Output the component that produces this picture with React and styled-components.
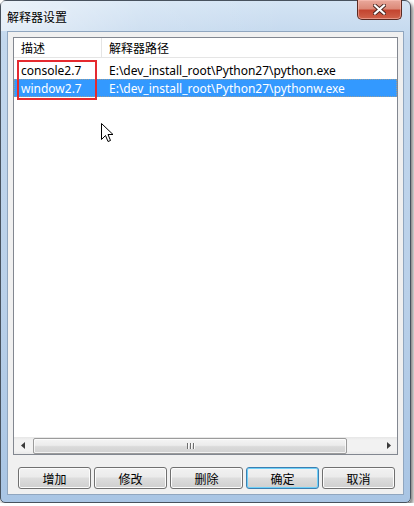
import React from 'react';
import styled, { createGlobalStyle, css } from 'styled-components';

const GlobalStyle = createGlobalStyle`
    html, body {
        margin: 0;
        padding: 0;
        background: #ffffff;
    }
    body {
        font-family: "Noto Sans", "Noto Sans CJK SC", sans-serif;
        font-size: 12px;
        color: #000;
    }
`;

const uiFont = `"Noto Sans", "Noto Sans CJK SC", sans-serif`;
const cjkFont = `"Noto Sans CJK SC", sans-serif`;

const Window = styled.div`
    box-sizing: border-box;
    width: 411px;
    height: 503px;
    display: flex;
    flex-direction: column;
    border: 1px solid #48525e;
    border-radius: 6px 6px 5px 5px;
    background: linear-gradient(to bottom, #d4e4f4 0%, #c2d7ed 8%, #b9d0e9 60%, #a9c5e4 100%);
    box-shadow: 2px 3px 4px rgba(0, 0, 0, 0.55);
`;

const TitleBar = styled.div`
    height: 30px;
    display: flex;
    align-items: flex-start;
    justify-content: space-between;
    padding-left: 6px;
    background: linear-gradient(100deg, rgba(255,255,255,0.55) 0%, rgba(255,255,255,0.15) 35%, rgba(255,255,255,0) 70%);
`;

const Title = styled.span`
    font-family: ${cjkFont};
    font-size: 12px;
    line-height: 14px;
    margin-top: 9px;
    color: #000;
    text-shadow: 0 0 6px rgba(255,255,255,0.9);
`;

const CloseButton = styled.div`
    box-sizing: border-box;
    width: 45px;
    height: 20px;
    margin-right: 8px;
    margin-top: -1px;
    display: flex;
    align-items: center;
    justify-content: center;
    border: 1px solid #5a2a22;
    border-top: none;
    border-radius: 0 0 5px 5px;
    background: linear-gradient(to bottom, #e9a99c 0%, #dc8a79 45%, #c44530 55%, #d0634b 100%);
    box-shadow: inset 0 0 0 1px rgba(255, 200, 190, 0.5);
`;

const Client = styled.div`
    flex: 1;
    margin: 0 6px;
    display: flex;
    flex-direction: column;
    padding: 5px;
    background: #f0f0f0;
    border: 1px solid #90a6bf;
`;

const ListView = styled.div`
    flex: 1;
    display: flex;
    flex-direction: column;
    background: #ffffff;
    border: 1px solid #828790;
    font-family: ${uiFont};
`;

const Header = styled.div`
    box-sizing: border-box;
    height: 20px;
    display: flex;
    border-bottom: 1px solid #e5e5e5;
`;

const HeaderCell = styled.div`
    box-sizing: border-box;
    width: ${({ width }) => width};
    flex: ${({ grow }) => (grow ? 1 : 'none')};
    padding-left: 7px;
    padding-top: 3px;
    font-family: ${cjkFont};
    font-size: 12px;
    line-height: 14px;
    border-right: 1px solid ${({ grow }) => (grow ? 'transparent' : '#e5e5e5')};
`;

const Body = styled.div`
    flex: 1;
    position: relative;
    padding-top: 3px;
`;

const Row = styled.div`
    box-sizing: border-box;
    height: 18px;
    display: flex;
    align-items: center;
    font-size: 12px;
    ${({ selected }) => selected && css`
        background: #3399ff;
        color: #ffffff;
        outline: 1px dotted rgba(214, 160, 90, 0.6);
        outline-offset: -1px;
    `};
`;

const Cell = styled.div`
    box-sizing: border-box;
    width: ${({ width }) => width};
    padding-left: 7px;
    white-space: nowrap;
`;

const Marker = styled.div`
    position: absolute;
    box-sizing: border-box;
    left: 3px;
    top: 2px;
    width: 80px;
    height: 40px;
    border: 2px solid #e52a2f;
    pointer-events: none;
`;

const Pointer = styled.svg`
    position: absolute;
    left: 87px;
    top: 65px;
`;

const ScrollBar = styled.div`
    height: 17px;
    display: flex;
    align-items: center;
    background: linear-gradient(to bottom, #e6e6e6, #f2f2f2 20%, #f2f2f2 80%, #e9e9e9);
`;

const Arrow = styled.div`
    width: 17px;
    height: 17px;
    display: flex;
    align-items: center;
    justify-content: center;
`;

const Thumb = styled.div`
    box-sizing: border-box;
    flex: 1;
    margin: 0 33px 0 2px;
    height: 16px;
    display: flex;
    align-items: center;
    justify-content: center;
    gap: 2px;
    border: 1px solid #9b9b9b;
    border-radius: 2px;
    background: linear-gradient(to bottom, #f4f4f4 0%, #ececec 45%, #dadada 55%, #d2d2d2 100%);
    box-shadow: inset 0 0 0 1px rgba(255,255,255,0.7);
`;

const Grip = styled.span`
    width: 1px;
    height: 6px;
    background: #6e6e6e;
    box-shadow: 1px 0 0 #fafafa;
`;

const ButtonRow = styled.div`
    display: flex;
    gap: 3px;
    margin-top: 12px;
    padding-left: 5px;
`;

const Button = styled.div`
    box-sizing: border-box;
    width: 73px;
    height: 22px;
    display: flex;
    align-items: center;
    justify-content: center;
    font-family: ${cjkFont};
    font-size: 12px;
    border: 1px solid #707070;
    border-radius: 3px;
    background: linear-gradient(to bottom, #f2f2f2 0%, #ebebeb 45%, #dddddd 50%, #cfcfcf 100%);
    box-shadow: inset 0 0 0 1px #fcfcfc;
    ${({ primary }) => primary && css`
        border-color: #3c7fb1;
        box-shadow: inset 0 0 0 1px #6fd0f8;
    `};
`;

const BottomFrame = styled.div`
    height: 7px;
`;

const rows = [
    { name: 'console2.7', path: 'E:\\dev_install_root\\Python27\\python.exe' },
    { name: 'window2.7', path: 'E:\\dev_install_root\\Python27\\pythonw.exe', selected: true },
];

const buttons = ['增加', '修改', '删除', '确定', '取消'];

function CloseIcon() {
    return (
        <svg width="13" height="11" viewBox="0 0 13 11">
            <path d="M2 1.5 L11 9.5 M11 1.5 L2 9.5" stroke="#4a2620" strokeWidth="4" strokeLinecap="square" />
            <path d="M2 1.5 L11 9.5 M11 1.5 L2 9.5" stroke="#ffffff" strokeWidth="2.2" strokeLinecap="square" />
        </svg>
    );
}

function App() {
    return (
        <>
            <GlobalStyle />
            <Window>
                <TitleBar>
                    <Title>解释器设置</Title>
                    <CloseButton>
                        <CloseIcon />
                    </CloseButton>
                </TitleBar>
                <Client>
                    <ListView>
                        <Header>
                            <HeaderCell width="88px">描述</HeaderCell>
                            <HeaderCell grow>解释器路径</HeaderCell>
                        </Header>
                        <Body>
                            {rows.map((r) => (
                                <Row key={r.name} selected={r.selected}>
                                    <Cell width="88px">{r.name}</Cell>
                                    <Cell>{r.path}</Cell>
                                </Row>
                            ))}
                            <Marker />
                            <Pointer width="13" height="21" viewBox="0 0 13 21">
                                <path d="M0.5 0.5 L0.5 16.5 L4.5 12.5 L7 18.5 L9.5 17.5 L7 11.5 L12 11.5 Z" fill="#ffffff" stroke="#000000" strokeWidth="1" strokeLinejoin="miter" />
                            </Pointer>
                        </Body>
                        <ScrollBar>
                            <Arrow>
                                <svg width="4" height="7" viewBox="0 0 4 7"><path d="M4 0 L0 3.5 L4 7 Z" fill="#3a3a3a" /></svg>
                            </Arrow>
                            <Thumb>
                                <Grip />
                                <Grip />
                                <Grip />
                            </Thumb>
                            <Arrow>
                                <svg width="4" height="7" viewBox="0 0 4 7"><path d="M0 0 L4 3.5 L0 7 Z" fill="#3a3a3a" /></svg>
                            </Arrow>
                        </ScrollBar>
                    </ListView>
                    <ButtonRow>
                        {buttons.map((b) => (
                            <Button key={b} primary={b === '确定'}>{b}</Button>
                        ))}
                    </ButtonRow>
                </Client>
                <BottomFrame />
            </Window>
        </>
    );
}

export default App;
